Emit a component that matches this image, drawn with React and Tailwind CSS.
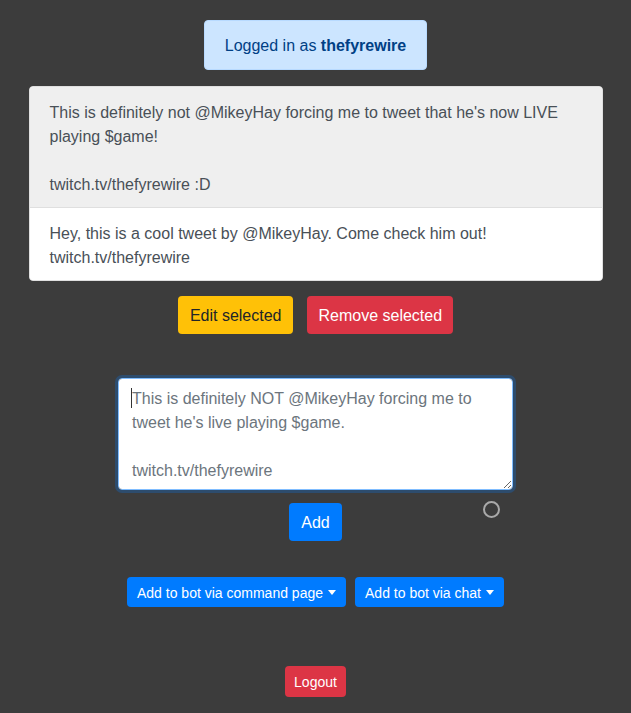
import React from 'react';

const tweets = [
  {
    text: "This is definitely not @MikeyHay forcing me to tweet that he's now LIVE playing $game!\n\ntwitch.tv/thefyrewire :D",
    selected: true,
  },
  {
    text: 'Hey, this is a cool tweet by @MikeyHay. Come check him out!\ntwitch.tv/thefyrewire',
    selected: false,
  },
];

function Caret() {
  return <span className="ml-[5px] inline-block align-[3px] border-x-[4.5px] border-t-[5px] border-x-transparent border-t-white" />;
}

export default function App() {
  return (
    <div className="min-h-[713px] bg-[#3c3c3c] font-['Liberation_Sans',sans-serif] text-[16px] leading-6 text-[#495057]">
      <div className="flex flex-col items-center pt-5">
        {/* login status */}
        <div className="rounded border border-[#b8daff] bg-[#cce5ff] px-5 pb-[11px] pt-[13px] text-[#004085]">
          Logged in as <b className="font-bold">thefyrewire</b>
        </div>

        {/* tweet list */}
        <ul className="mt-4 w-[574px] overflow-hidden rounded border border-[#dfdfdf] bg-white">
          {tweets.map((t, i) => (
            <li
              key={i}
              className={`whitespace-pre-wrap px-5 pb-[10px] pt-[14px] ${i > 0 ? 'border-t border-[#dfdfdf]' : ''} ${t.selected ? 'bg-[#efefef]' : 'bg-white'}`}
            >
              {t.text}
            </li>
          ))}
        </ul>

        <div className="mt-[15px] flex gap-[14px]">
          <button className="h-[38px] rounded bg-[#ffc107] px-3 pt-[2px] text-[#212529]">Edit selected</button>
          <button className="h-[38px] rounded bg-[#dc3545] px-[11px] pt-[2px] text-white">Remove selected</button>
        </div>

        {/* new tweet */}
        <div className="relative mt-[44px] flex flex-col items-center">
          <textarea
            readOnly
            placeholder={"This is definitely NOT @MikeyHay forcing me to tweet he's live playing $game.\n\ntwitch.tv/thefyrewire"}
            className="h-[112px] w-[395px] rounded border border-[#80bdff] bg-white px-[13px] pb-[7px] pt-[8px] text-[#495057] shadow-[0_0_0_3px_rgba(0,123,255,0.25)] outline-none placeholder:text-[#6c757d]"
          />
          <span className="absolute left-[13px] top-[10px] h-[20px] w-px bg-[#333]" />
          <button className="mt-[13px] h-[38px] rounded bg-[#007bff] px-3 pt-[2px] text-white">Add</button>
          <span className="absolute right-[13px] top-[123px] h-[17px] w-[17px] rounded-full border-2 border-[#a9a9a9]" />
        </div>

        <div className="mt-9 flex gap-[9px] text-[14px]">
          <button className="h-[30px] rounded bg-[#007bff] px-[10px] pt-[1px] text-white">
            Add to bot via command page
            <Caret />
          </button>
          <button className="h-[30px] rounded bg-[#007bff] px-[10px] pt-[1px] text-white">
            Add to bot via chat
            <Caret />
          </button>
        </div>

        <button className="mt-[59px] h-[31px] rounded bg-[#dc3545] px-[9px] pt-[1px] text-[14px] text-white">Logout</button>
      </div>
    </div>
  );
}
